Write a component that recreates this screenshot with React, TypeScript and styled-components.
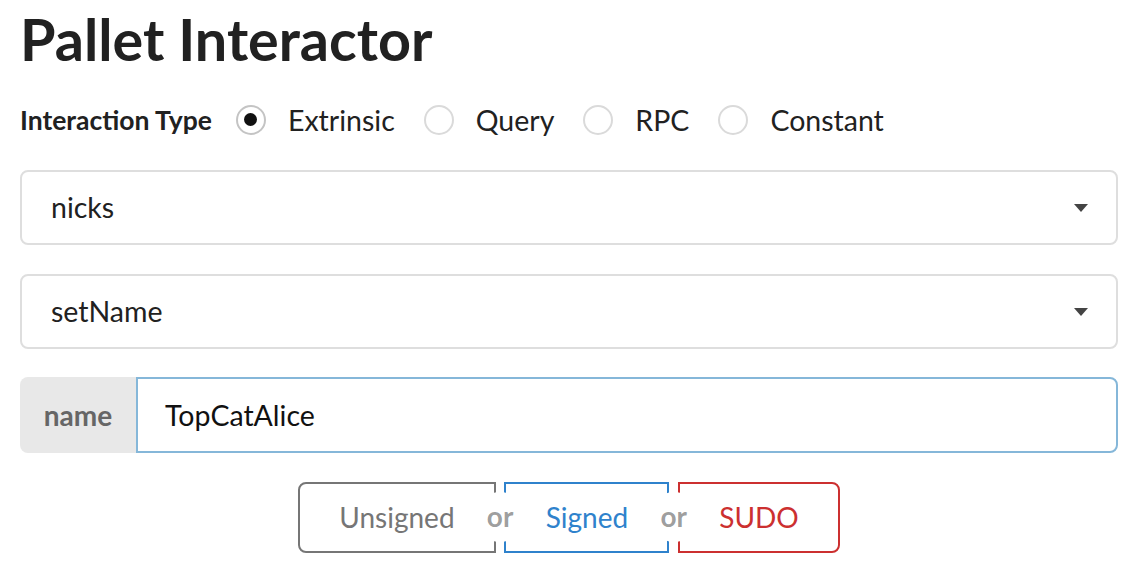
import React from "react";
import styled, { createGlobalStyle } from "styled-components";

const Global = createGlobalStyle`
  html, body { margin: 0; padding: 0; background: #fff; }
  body { font-family: Lato, "Open Sans", sans-serif; color: rgba(0,0,0,0.87); }
  * { box-sizing: border-box; }
`;

const Page = styled.div`
  width: 1138px;
  padding: 10px 20px 0 20px;
`;

const Title = styled.h1`
  margin: 0;
  font-size: 57.5px;
  line-height: 1;
  font-weight: 700;
  color: #212121;
`;

const TypeRow = styled.div`
  display: flex;
  align-items: center;
  height: 34px;
  margin-top: 35px;
`;

const FieldLabel = styled.span`
  font-size: 26.5px;
  font-weight: 700;
  color: #212121;
  margin-right: 24px;
`;

const RadioItem = styled.label`
  display: flex;
  align-items: center;
  margin-right: 29px;
  font-size: 28.5px;
  color: #212121;
  cursor: pointer;
`;

const RadioCircle = styled.span<{ $checked?: boolean }>`
  width: 30px;
  height: 30px;
  border-radius: 50%;
  border: 2px solid ${(p) => (p.$checked ? "#c4c4c4" : "#dadada")};
  display: flex;
  align-items: center;
  justify-content: center;
  margin-right: 22px;
  &::after {
    content: "";
    display: ${(p) => (p.$checked ? "block" : "none")};
    width: 13px;
    height: 13px;
    border-radius: 50%;
    background: #111;
  }
`;

const Select = styled.div<{ $mt: number }>`
  margin-top: ${(p) => p.$mt}px;
  height: 75px;
  border: 2px solid #dedede;
  border-radius: 8px;
  display: flex;
  align-items: center;
  justify-content: space-between;
  padding: 0 28px 0 29px;
  font-size: 28.5px;
  color: #212121;
`;

const Caret = styled.svg`
  width: 14px;
  height: 8px;
  margin-top: 2px;
`;

const InputRow = styled.div`
  margin-top: 28px;
  height: 76px;
  display: flex;
`;

const InputLabel = styled.div`
  width: 116px;
  background: #e8e8e8;
  border-radius: 8px 0 0 8px;
  display: flex;
  align-items: center;
  justify-content: center;
  font-size: 28px;
  font-weight: 700;
  color: #666;
`;

const InputBox = styled.div`
  flex: 1;
  border: 2px solid #85b7d9;
  border-radius: 0 8px 8px 0;
  display: flex;
  align-items: center;
  padding-left: 27px;
  font-size: 28.5px;
  color: #111;
`;

const ButtonGroup = styled.div`
  margin-top: 29px;
  display: flex;
  justify-content: center;
`;

const Btn = styled.div<{ $color: string; $radius: string }>`
  height: 71px;
  display: flex;
  align-items: center;
  padding: 0 39.3px;
  border: 2px solid ${(p) => p.$color};
  color: ${(p) => p.$color};
  border-radius: ${(p) => p.$radius};
  font-size: 28px;
  background: #fff;
`;

const Or = styled.div`
  position: relative;
  width: 8.5px;
  z-index: 3;
  &::before {
    content: "or";
    position: absolute;
    top: 50%;
    left: 50%;
    width: 50px;
    height: 50px;
    margin-top: -25px;
    margin-left: -25px;
    border-radius: 50%;
    background: #fff;
    color: rgba(0, 0, 0, 0.4);
    font-size: 28px;
    font-weight: 700;
    line-height: 48px;
    text-align: center;
  }
`;

const CaretIcon = () => (
  <Caret viewBox="0 0 14 8">
    <path d="M0 0 H14 L7 8 Z" fill="#444" />
  </Caret>
);

const radios = ["Extrinsic", "Query", "RPC", "Constant"];

export default function App() {
  return (
    <>
      <Global />
      <Page>
        <Title>Pallet Interactor</Title>
        <TypeRow>
          <FieldLabel>Interaction Type</FieldLabel>
          {radios.map((r, i) => (
            <RadioItem key={r}>
              <RadioCircle $checked={i === 0} />
              {r}
            </RadioItem>
          ))}
        </TypeRow>
        <Select $mt={33}>
          <span>nicks</span>
          <CaretIcon />
        </Select>
        <Select $mt={29}>
          <span>setName</span>
          <CaretIcon />
        </Select>
        <InputRow>
          <InputLabel>name</InputLabel>
          <InputBox>TopCatAlice</InputBox>
        </InputRow>
        <ButtonGroup>
          <Btn $color="#767676" $radius="8px 0 0 8px">Unsigned</Btn>
          <Or />
          <Btn $color="#2f82cc" $radius="0">Signed</Btn>
          <Or />
          <Btn $color="#cc3030" $radius="0 8px 8px 0">SUDO</Btn>
        </ButtonGroup>
      </Page>
    </>
  );
}
